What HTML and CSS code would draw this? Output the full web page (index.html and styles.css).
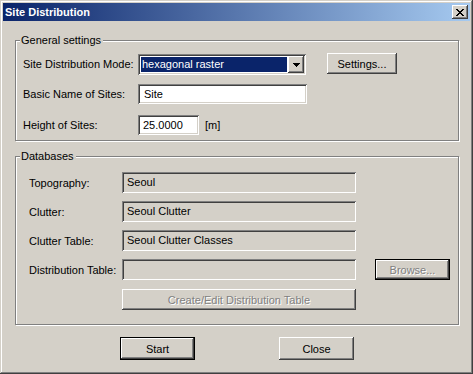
FILE: index.html
```html
<!DOCTYPE html>
<html lang="en">
<head>
<meta charset="utf-8">
<title>Site Distribution</title>
<link rel="stylesheet" href="styles.css">
</head>
<body>
<div class="window">
  <div class="titlebar">
    <span class="title">Site Distribution</span>
    <button class="btn close" type="button" aria-label="Close">
      <svg width="8" height="7" viewBox="0 0 8 7" shape-rendering="crispEdges">
        <path fill="#000" d="M0 0h2v1H0zM6 0h2v1H6zM1 1h2v1H1zM5 1h2v1H5zM2 2h4v1H2zM3 3h2v1H3zM2 4h4v1H2zM1 5h2v1H1zM5 5h2v1H5zM0 6h2v1H0zM6 6h2v1H6z"/>
      </svg>
    </button>
  </div>
  <div class="client">
    <fieldset class="group general">
      <legend>General settings</legend>
      <div class="body">
        <div class="row r1">
          <span class="label">Site Distribution Mode:</span>
          <div class="combo">
            <span class="sel">hexagonal raster</span>
            <span class="btn drop">
              <svg width="7" height="4" viewBox="0 0 7 4" shape-rendering="crispEdges"><path fill="#000" d="M0 0h7v1H0zM1 1h5v1H1zM2 2h3v1H2zM3 3h1v1H3z"/></svg>
            </span>
          </div>
          <button class="btn settings" type="button">Settings...</button>
        </div>
        <div class="row r2">
          <span class="label">Basic Name of Sites:</span>
          <input class="field edit name" type="text" value="Site">
        </div>
        <div class="row r3">
          <span class="label">Height of Sites:</span>
          <input class="field edit height" type="text" value="25.0000">
          <span class="unit">[m]</span>
        </div>
      </div>
    </fieldset>

    <fieldset class="group databases">
      <legend>Databases</legend>
      <div class="body">
        <div class="row">
          <span class="label">Topography:</span>
          <div class="field ro">Seoul</div>
        </div>
        <div class="row">
          <span class="label">Clutter:</span>
          <div class="field ro">Seoul Clutter</div>
        </div>
        <div class="row">
          <span class="label">Clutter Table:</span>
          <div class="field ro">Seoul Clutter Classes</div>
        </div>
        <div class="row">
          <span class="label">Distribution Table:</span>
          <div class="field ro"></div>
          <button class="btn default disabled browse" type="button">Browse...</button>
        </div>
        <div class="row last">
          <button class="btn disabled create" type="button">Create/Edit Distribution Table</button>
        </div>
      </div>
    </fieldset>

    <div class="actions">
      <button class="btn default action" type="button">Start</button>
      <button class="btn action" type="button">Close</button>
    </div>
  </div>
</div>
</body>
</html>
```
FILE: styles.css
```css
* { box-sizing: border-box; }
html, body { margin: 0; padding: 0; }
body {
  width: 473px;
  height: 374px;
  overflow: hidden;
  background: #d4d0c8;
  font-family: "Liberation Sans", Arial, sans-serif;
  font-size: 11px;
  color: #000;
}

.window {
  width: 473px;
  height: 374px;
  padding: 3px;
  display: flex;
  flex-direction: column;
  background: #d4d0c8;
  box-shadow: inset -1px -1px 0 #404040, inset 1px 1px 0 #d4d0c8,
              inset -2px -2px 0 #808080, inset 2px 2px 0 #fff;
}

.titlebar {
  flex: none;
  height: 18px;
  display: flex;
  align-items: center;
  justify-content: space-between;
  padding: 0 2px;
  background: linear-gradient(to right, #0a246a, #a6caf0);
}
.title {
  color: #fff;
  font-weight: bold;
  font-size: 11px;
  line-height: 18px;
}

.btn {
  font: inherit;
  color: #000;
  background: #d4d0c8;
  border: none;
  padding: 0;
  margin: 0;
  display: flex;
  align-items: center;
  justify-content: center;
  box-shadow: inset -1px -1px 0 #404040, inset 1px 1px 0 #fff,
              inset -2px -2px 0 #808080, inset 2px 2px 0 #d4d0c8;
}
.btn.default {
  box-shadow: inset 0 0 0 1px #000, inset -2px -2px 0 #404040,
              inset 2px 2px 0 #fff, inset -3px -3px 0 #808080;
}
.btn.disabled {
  color: #808080;
  text-shadow: 1px 1px 0 #fff;
}

.close {
  width: 16px;
  height: 14px;
}

.client {
  flex: 1;
  display: flex;
  flex-direction: column;
  padding: 13px 11px 0 12px;
}

.group {
  margin: 0;
  padding: 0;
  min-width: 0;
  border: 1px solid #808080;
  box-shadow: 1px 1px 0 #fff, inset 1px 1px 0 #fff;
}
.group legend {
  margin-left: 4px;
  padding: 0 2px 0 1px;
  line-height: 13px;
  background: #d4d0c8;
}

.row {
  display: flex;
  align-items: center;
}
.label { flex: none; }

/* General settings */
.general .body { padding: 7px 0 5px 7px; }
.general .label { width: 115px; }
.general .r1 { align-items: flex-start; height: 21px; }
.general .r1 .label { line-height: 21px; }
.general .r2 { margin-top: 9px; }
.general .r3 { margin-top: 11px; }

.combo {
  width: 168px;
  height: 21px;
  padding: 2px;
  display: flex;
  background: #fff;
  box-shadow: inset 1px 1px 0 #808080, inset -1px -1px 0 #fff,
              inset 2px 2px 0 #404040, inset -2px -2px 0 #d4d0c8;
}
.combo .sel {
  flex: 1;
  margin: 1px;
  padding-left: 1px;
  background: #0a246a;
  color: #fff;
  line-height: 15px;
}
.combo .drop {
  width: 16px;
  height: 17px;
}

.settings {
  width: 70px;
  height: 21px;
  margin: -1px 0 0 21px;
}

.field {
  border: none;
  margin: 0;
  font: inherit;
  color: #000;
  box-shadow: inset 1px 1px 0 #808080, inset -1px -1px 0 #fff,
              inset 2px 2px 0 #404040, inset -2px -2px 0 #d4d0c8;
}
.field.edit {
  height: 20px;
  background: #fff;
  padding: 0 0 0 6px;
  outline: none;
}
.field.name { width: 169px; }
.field.height { width: 61px; padding-left: 5px; }
.unit { margin-left: 6px; }

/* Databases */
.databases { margin-top: 9px; }
.databases .body { padding: 9px 0 14px 13px; }
.databases .label { width: 93px; }
.databases .row + .row { margin-top: 8px; }
.databases .row.last { margin-top: 9px; padding-left: 93px; }
.field.ro {
  width: 234px;
  height: 21px;
  padding-left: 5px;
  line-height: 21px;
  background: #d4d0c8;
}
.browse {
  width: 75px;
  height: 21px;
  margin-left: 19px;
}
.create {
  width: 234px;
  height: 21px;
}

.actions {
  margin-top: 12px;
  display: flex;
  justify-content: center;
  gap: 84px;
}
.action {
  width: 75px;
  height: 23px;
}
```
